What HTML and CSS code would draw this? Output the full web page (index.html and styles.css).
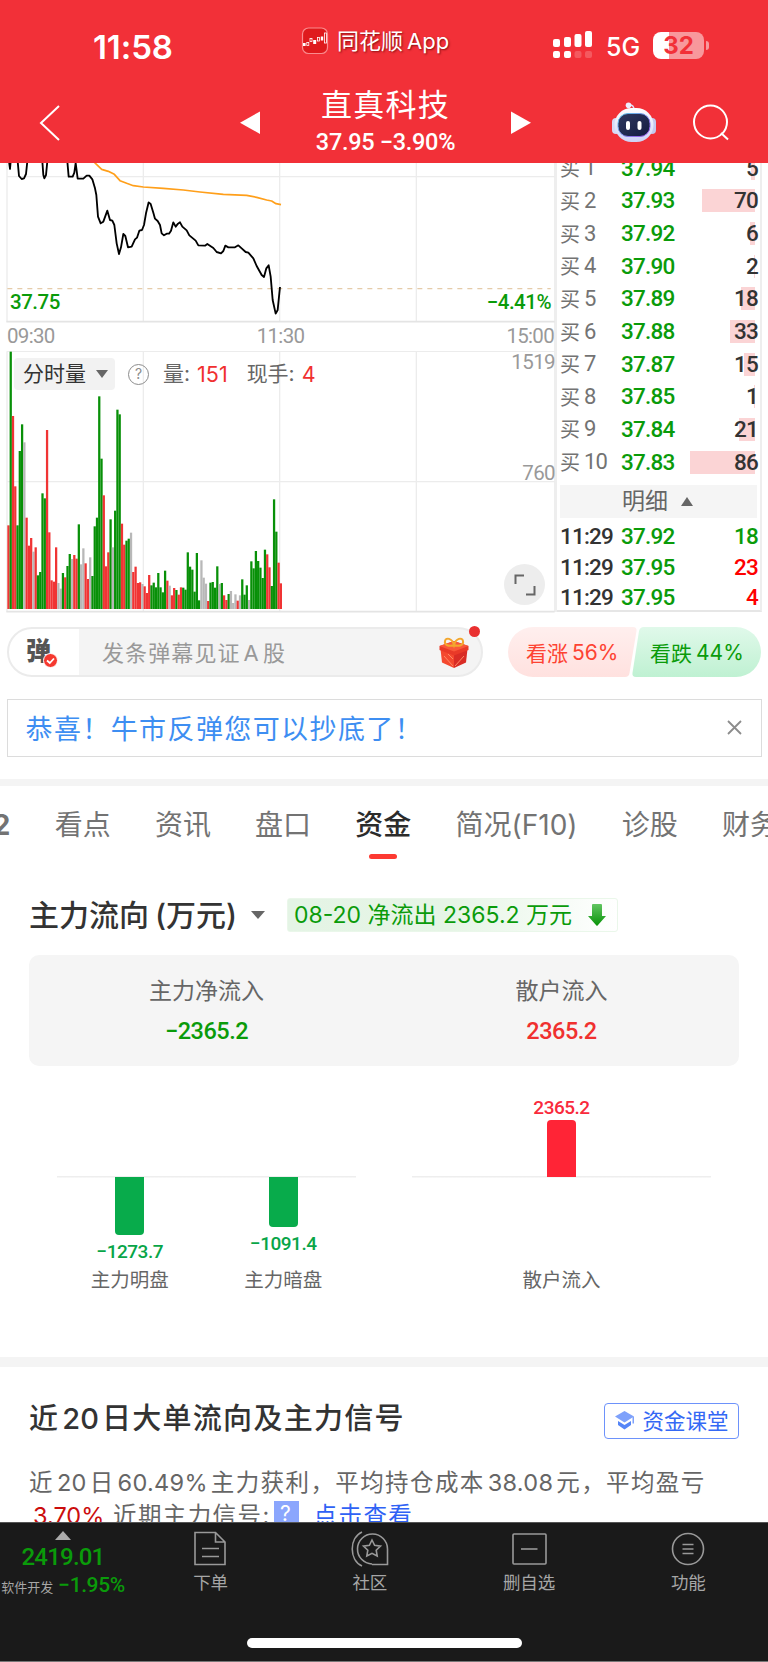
FILE: index.html
```html
<!DOCTYPE html>
<html lang="zh-CN">
<head>
  <meta charset="UTF-8">
  <meta name="viewport" content="width=device-width, initial-scale=1.0">
  <title>直真科技</title>
  <link rel="stylesheet" href="styles.css">
</head>
<body>
  <div class="app">
    <header class="header">
      <div class="status-bar">
        <span class="clock">11:58</span>
        <div class="app-tag">
          <svg width="28" height="28" viewBox="0 0 28 28" fill="none">
            <rect x="1.5" y="1" width="25" height="25.5" rx="6" fill="#df1a1d" stroke="#fa8b8e" stroke-width="1.2"/>
            <rect x="2" y="16" width="2.6" height="3" fill="#fff"/>
            <rect x="5.8" y="15.5" width="2" height="3" stroke="#fff" stroke-width=".8"/>
            <rect x="9" y="11.5" width="2" height="3" stroke="#fff" stroke-width=".8"/>
            <rect x="12.2" y="13" width="3" height="4" fill="#fff"/>
            <rect x="16.5" y="10.5" width="2" height="3.5" stroke="#fff" stroke-width=".8"/>
            <rect x="19.8" y="9.5" width="2.4" height="4" fill="#fff"/>
            <rect x="23.4" y="6" width="2" height="10" stroke="#fff" stroke-width=".8"/>
          </svg>
          <span>同花顺<em>App</em></span>
        </div>
        <svg class="signal" width="40" height="28" viewBox="0 0 40 28" fill="#fff">
          <rect x="0" y="8" width="7" height="8" rx="2"/>
          <rect x="11" y="6" width="7" height="10" rx="2"/>
          <rect x="21.5" y="3" width="7" height="13" rx="2"/>
          <rect x="32" y="0" width="7" height="16" rx="2"/>
          <rect x="0" y="20" width="7" height="7" rx="2"/>
          <rect x="11" y="20" width="7" height="7" rx="2"/>
          <rect x="21.5" y="20" width="7" height="7" rx="2" opacity=".2"/>
          <rect x="32" y="20" width="7" height="7" rx="2" opacity=".2"/>
        </svg>
        <span class="net">5G</span>
        <div class="battery"><span>32</span></div>
        <i class="battery-tip"></i>
      </div>
      <div class="title-bar">
        <svg class="back" width="22" height="38" viewBox="0 0 22 38" fill="none" stroke="#fff" stroke-width="2"><path d="M20 2L2 19L20 36"/></svg>
        <svg class="prev" width="20" height="24" viewBox="0 0 20 24" fill="#fff"><path d="M20 0.5V23L0 11.7z"/></svg>
        <div class="stock">
          <h1>直真科技</h1>
          <p>37.95 −3.90%</p>
        </div>
        <svg class="next" width="20" height="24" viewBox="0 0 20 24" fill="#fff"><path d="M0 0.5V23L20 11.7z"/></svg>
        <svg class="robot" width="44" height="42" viewBox="0 0 44 42">
          <defs>
            <linearGradient id="head" x1="0" y1="0" x2="0" y2="1"><stop offset="0" stop-color="#fff"/><stop offset="1" stop-color="#cdd2f6"/></linearGradient>
            <linearGradient id="face" x1="0" y1="0" x2="1" y2="1"><stop offset="0" stop-color="#30395f"/><stop offset="1" stop-color="#141b40"/></linearGradient>
            <linearGradient id="rim" x1="0" y1="0" x2="1" y2="1"><stop offset="0" stop-color="#5ac8e8"/><stop offset="1" stop-color="#a052e8"/></linearGradient>
          </defs>
          <path d="M17 3Q22 2.500 22 8" fill="none" stroke="#dfe2fa" stroke-width="1.600"/>
          <circle cx="16.500" cy="3.200" r="2.800" fill="#eceefe"/>
          <rect x="0" y="16" width="8" height="16" rx="4" fill="#d6daf6"/>
          <rect x="36" y="16" width="8" height="16" rx="4" fill="#c3c8ee"/>
          <rect x="2.500" y="6" width="39" height="34" rx="17" fill="url(#head)"/>
          <rect x="6" y="11.500" width="32" height="23" rx="10" fill="url(#face)" stroke="url(#rim)" stroke-width="1"/>
          <rect x="14" y="19" width="4" height="9" rx="2" fill="#fff"/>
          <rect x="25.500" y="19" width="4" height="9" rx="2" fill="#fff"/>
        </svg>
        <svg class="search" width="38" height="38" viewBox="0 0 38 38" fill="none" stroke="#fff" stroke-width="2"><circle cx="18.500" cy="18" r="16.500"/><path d="M29 29L36 35.500"/></svg>
      </div>
    </header>

    <main>
      <section class="quote">
        <div class="charts">
          <div class="price-chart">
            <svg width="556" height="160" viewBox="0 9 1668 480" fill="none">
              <path d="M21 9V485M430 9V485M839 9V485M1249 9V485M21 50H1664" stroke="#ececec" stroke-width="4"/>
              <path d="M19 485H1664" stroke="#e4e4e4" stroke-width="5"/>
              <path d="M22 386H1652" stroke="#e5cba9" stroke-width="4" stroke-dasharray="15 15"/>
              <polyline points="280,4 305,28 325,34 343,43 360,62 380,70 400,77 430,81 490,85 550,90 600,96 670,103 740,106 770,112 800,120 815,123 828,131 843,134" stroke="#ff9f1a" stroke-width="5" stroke-linejoin="round"/>
              <g stroke="#000" stroke-width="5.500" stroke-linejoin="round">
                <polyline points="27,4 30,27 32,4"/>
                <polyline points="53,4 57,48 65,57 72,55 78,42 82,4"/>
                <polyline points="127,4 130,45 133,55 138,45 142,4"/>
                <polyline points="202,4 206,50 218,50 223,38 227,9 233,56 250,56 260,47 268,47 277,58 285,85 289,105 294,170 302,190 310,185 322,152 330,180 337,182 343,195 350,250 357,282 363,262 370,222 376,228 384,262 395,260 405,238 411,233 418,212 426,210 432,195 438,160 446,127 452,132 460,158 465,176 473,183 480,195 485,220 492,226 500,221 507,221 513,212 520,187 527,200 534,191 540,187 547,200 560,211 568,226 587,242 595,256 615,257 622,252 640,264 650,276 663,280 670,273 676,257 685,262 705,262 715,256 725,265 737,276 745,278 760,295 770,318 785,345 792,351 799,325 806,316 812,350 818,420 827,461 833,450 838,400 840,381"/>
              </g>
            </svg>
            <div class="price-labels num green"><span>37.75</span><span>−4.41%</span></div>
          </div>
          <div class="time-axis num"><span>09:30</span><span>11:30</span><span>15:00</span></div>
          <div class="volume-chart">
            <svg width="556" height="262" viewBox="0 18 1668 786" fill="none">
              <path d="M21 19V800M430 19V800M839 19V800M1249 19V800M21 19H1664M21 410H1664" stroke="#ececec" stroke-width="4"/>
              <path d="M19 800H1664" stroke="#e4e4e4" stroke-width="5"/>
              <g id="volume-bars"></g>
            </svg>
            <div class="volume-head">
              <span class="indicator">分时量 <i class="tri-down"></i></span>
              <span class="help">?</span>
              <span class="vol">量: <b>151</b></span>
              <span class="vol">现手: <b>4</b></span>
            </div>
            <span class="scale scale-top num">1519</span>
            <span class="scale scale-mid num">760</span>
            <span class="expand">
              <svg width="22" height="22" viewBox="0 0 22 22" fill="none" stroke="#666" stroke-width="2"><path d="M1.500 10V1.500H10M20.500 12V20.500H12"/></svg>
            </span>
          </div>
        </div>
        <div class="book">
          <div class="orders" id="orders"></div>
          <div class="detail-toggle">明细 <i class="tri-up"></i></div>
          <div class="trades num">
            <div class="trade"><span>11:29</span><span class="green">37.92</span><span class="green">18</span></div>
            <div class="trade"><span>11:29</span><span class="green">37.95</span><span class="red">23</span></div>
            <div class="trade"><span>11:29</span><span class="green">37.95</span><span class="red">4</span></div>
          </div>
        </div>
      </section>

      <section class="danmaku">
        <div class="danmaku-input">
          <div class="danmaku-switch">弹
            <svg class="check" width="15" height="15" viewBox="0 0 15 15"><circle cx="7.500" cy="7.500" r="7" fill="#f5392f" stroke="#fff" stroke-width="1"/><path d="M4 7.500L6.800 10L11 5.500" fill="none" stroke="#fff" stroke-width="1.800"/></svg>
          </div>
          <span class="placeholder">发条弹幕见证<em>A</em>股</span>
          <svg class="gift" width="30" height="31" viewBox="0 0 30 31">
            <path d="M1.500 12L15 17V31L3 25.500z" fill="#f4492f"/>
            <path d="M28.500 12L15 17V31L27 25.500z" fill="#d92c25"/>
            <path d="M0.500 9L15 4L29.500 9V13L15 18.500L0.500 13z" fill="#e93a28"/>
            <path d="M0.500 9L15 4L29.500 9L15 14.500z" fill="#f9583a"/>
            <path d="M5 19L14 29M9 17L14 22M25 19L16 29" stroke="#ff8a66" stroke-width="1"/>
            <path d="M15 8C10 10 5 8 6 4C7 0 13 1 15 8C17 1 23 0 24 4C25 8 20 10 15 8z" fill="none" stroke="#f3a72e" stroke-width="2"/>
          </svg>
          <i class="dot"></i>
        </div>
        <div class="vote vote-up">看涨<span>56%</span></div>
        <div class="vote vote-down">看跌<span>44%</span></div>
      </section>

      <section class="notice">
        <span>恭喜！牛市反弹您可以抄底了！</span>
        <svg width="15" height="15" viewBox="0 0 15 15" stroke="#8c8c8c" stroke-width="1.800"><path d="M1 1L14 14M14 1L1 14"/></svg>
      </section>

      <nav class="tabs">
        <span class="tab tab-cut">2</span>
        <span class="tab">看点</span>
        <span class="tab">资讯</span>
        <span class="tab">盘口</span>
        <span class="tab active">资金</span>
        <span class="tab">简况(F10)</span>
        <span class="tab">诊股</span>
        <span class="tab">财务</span>
      </nav>

      <section class="flow">
        <div class="flow-head">
          <h2>主力流向<span>(万元)</span></h2>
          <i class="tri-down"></i>
          <div class="flow-badge">
            <span>08-20 净流出 2365.2 万元</span>
            <svg width="18" height="22" viewBox="0 0 18 22"><defs><linearGradient id="arrow" x1="0" y1="0" x2="0" y2="1"><stop offset="0" stop-color="#62c562"/><stop offset="1" stop-color="#089408"/></linearGradient></defs><path d="M4 1Q4 0 5 0H13Q14 0 14 1V12H18L9.600 21.500Q9 22 8.400 21.500L0 12H4z" fill="url(#arrow)"/></svg>
          </div>
        </div>
        <div class="summary">
          <div><p>主力净流入</p><b class="num green">−2365.2</b></div>
          <div><p>散户流入</p><b class="num red-soft">2365.2</b></div>
        </div>
        <div class="bars">
          <div class="bar-group">
            <div class="bar-col down"><div class="half"></div><div class="half"><i class="bar" style="height:58px"></i><span class="num">−1273.7</span></div><p>主力明盘</p></div>
            <div class="bar-col down"><div class="half"></div><div class="half"><i class="bar" style="height:50px"></i><span class="num">−1091.4</span></div><p>主力暗盘</p></div>
          </div>
          <div class="bar-group">
            <div class="bar-col up"><div class="half"><span class="num">2365.2</span><i class="bar" style="height:57px"></i></div><div class="half"></div><p>散户流入</p></div>
          </div>
        </div>
      </section>

      <section class="signal-section">
        <div class="signal-head">
          <h2>近<span>20</span>日大单流向及主力信号</h2>
          <a class="course">
            <svg width="21" height="19" viewBox="0 0 21 19" fill="#7ea1fb"><path d="M10.500 0L20 5.500L10.500 11.500L1 5.500z"/><path d="M18.500 6V12.500H20V5.500z"/><path d="M4 10L10.500 14L17 10V14L10.500 18.500L4 14z" fill="#5585f7"/></svg>
            资金课堂
          </a>
        </div>
        <p class="signal-text">近<span class="lat">20</span>日<span class="lat">60.49%</span>主力获利，平均持仓成本<span class="lat">38.08</span>元，平均盈亏</p>
        <p class="signal-text second"><span class="loss">3.70%</span><span>近期主力信号:</span><i class="q">?</i><a>点击查看</a></p>
      </section>
    </main>

    <footer class="toolbar">
      <div class="items">
        <div class="index">
          <i class="tri-up"></i>
          <span class="index-value num">2419.01</span>
          <div class="index-row"><small>软件开发</small><span class="num">−1.95%</span></div>
        </div>
        <div class="item">
          <svg width="40" height="36" viewBox="0 0 40 36" fill="none" stroke="#999" stroke-width="1.600"><path d="M4 1.500H24.500L34 11V33.500H4zM24.500 1.500V11H34M11 17.500H28M11 25.500H28"/></svg>
          <span>下单</span>
        </div>
        <div class="item">
          <svg width="40" height="36" viewBox="0 0 40 36" fill="none" stroke="#999" stroke-width="1.600"><path d="M12 1C-1 7-1 29 12 35M22 33A15 15 0 1 1 37.500 18V33.500H22"/><path d="M22 9L24.600 14.300L30.500 15.100L26.200 19.200L27.200 25L22 22.300L16.800 25L17.800 19.200L13.500 15.100L19.400 14.300z"/></svg>
          <span>社区</span>
        </div>
        <div class="item">
          <svg width="40" height="36" viewBox="0 0 40 36" fill="none" stroke="#999" stroke-width="1.600"><rect x="4" y="3" width="33" height="30" rx="1"/><path d="M12 18H28.500"/></svg>
          <span>删自选</span>
        </div>
        <div class="item">
          <svg width="40" height="36" viewBox="0 0 40 36" fill="none" stroke="#999" stroke-width="1.600"><circle cx="20" cy="18" r="15.500"/><path d="M14.500 13.500H25.500M14.500 18H25.500M14.500 22.500H25.500"/></svg>
          <span>功能</span>
        </div>
      </div>
      <div class="home-bar"></div>
    </footer>
  </div>
  <script src="script.js"></script>
</body>
</html>
```

FILE: styles.css
```css
* {
  box-sizing: border-box;
}

body {
  margin: 0;
  background: #fff;
  color: #333;
  font-family: Inter, "Noto Sans CJK SC", sans-serif;
}

h1, h2, p {
  margin: 0;
}

i, em {
  font-style: normal;
}

.app {
  width: 768px;
  height: 1662px;
  display: flex;
  flex-direction: column;
  overflow: hidden;
}

main {
  height: 1359px;
  overflow: hidden;
}

.num {
  font-family: Roboto, "Noto Sans CJK SC", sans-serif;
}

.green { color: #0a9b0a; }
.red { color: #fe0000; }
.red-soft { color: #f0302f; }

.tri-down, .tri-up {
  display: inline-block;
  border: 6px solid transparent;
}

.tri-down {
  border-top: 8px solid #666;
  border-bottom: 0;
}

.tri-up {
  border-bottom: 9px solid #666;
  border-top: 0;
}

/* header */
.header {
  height: 163px;
  flex: none;
  background: #f23038;
  color: #fff;
}

.status-bar {
  height: 85px;
  padding: 5px 58px 0 93px;
  display: flex;
  align-items: center;
}

.clock {
  width: 208px;
  font-size: 33px;
  font-weight: 600;
  letter-spacing: -0.1px;
  padding-top: 3px;
}

.app-tag {
  width: 252px;
  margin-top: -9px;
  display: flex;
  align-items: center;
  gap: 8px;
  font-size: 22px;
  line-height: 30px;
  text-shadow: 1px 1px 2px rgba(90, 0, 0, 0.7);
}

.app-tag em {
  margin-left: 4px;
}

.net {
  width: 47px;
  margin-left: 13px;
  font-size: 25px;
  font-weight: 500;
  padding-top: 3px;
}

.battery {
  width: 51px;
  height: 27px;
  border-radius: 8px;
  background: linear-gradient(to right, #fff 16px, #f8989c 16px);
  color: #f23038;
  font-size: 24px;
  font-weight: 700;
  line-height: 27px;
  text-align: center;
}

.battery-tip {
  width: 3px;
  height: 9px;
  margin-left: 2px;
  border-radius: 0 4px 4px 0;
  background: #f8989c;
}

.title-bar {
  height: 76px;
  padding-left: 39px;
  display: flex;
  align-items: center;
}

.title-bar svg {
  flex: none;
}

.prev { margin-left: 179px; }

.stock {
  width: 251px;
  text-align: center;
}

.stock h1 {
  font-size: 31px;
  font-weight: 400;
  letter-spacing: 1.2px;
  line-height: 40px;
  margin-top: -2px;
}

.stock p {
  font: 500 23.5px/34px Roboto, sans-serif;
  letter-spacing: -0.3px;
}

.robot { margin-left: 81px; }
.search { margin-left: 36px; }

/* chart + order book */
.quote {
  height: 449px;
  display: flex;
}

.charts {
  width: 557px;
  border-right: 3px solid #eee;
}

.price-chart {
  height: 160px;
  position: relative;
}

.price-chart svg, .volume-chart svg {
  display: block;
}

.price-labels {
  position: absolute;
  top: 126px;
  left: 10px;
  right: 3px;
  display: flex;
  justify-content: space-between;
  font-size: 20.5px;
  font-weight: 500;
  line-height: 26px;
  letter-spacing: -0.5px;
}

.time-axis {
  height: 28px;
  padding-left: 7px;
  display: flex;
  justify-content: space-between;
  color: #999;
  font-size: 20.5px;
  line-height: 27px;
  letter-spacing: -0.7px;
}

.volume-chart {
  position: relative;
}

.volume-head {
  position: absolute;
  left: 14px;
  top: 7px;
  height: 32px;
  display: flex;
  align-items: center;
  font-size: 21px;
  line-height: 30px;
  color: #666;
}

.indicator {
  width: 101px;
  height: 32px;
  padding-left: 9px;
  display: flex;
  align-items: center;
  gap: 10px;
  border-radius: 4px;
  background: #f2f2f2;
  color: #333;
}

.help {
  width: 21px;
  height: 21px;
  margin: 0 14px 0 13px;
  border: 1.5px solid #8c8c8c;
  border-radius: 50%;
  color: #8c8c8c;
  font-size: 14px;
  line-height: 18px;
  text-align: center;
}

.vol {
  margin-right: 19px;
  display: flex;
  align-items: center;
  gap: 7px;
}

.vol b {
  color: #f0302f;
  font-size: 21.5px;
  font-weight: 400;
}

.scale {
  position: absolute;
  right: -1px;
  color: #999;
  font-size: 20.5px;
  line-height: 24px;
  letter-spacing: -0.6px;
}

.scale-top { top: -1px; }
.scale-mid { top: 110px; }

.expand {
  position: absolute;
  left: 504px;
  top: 213px;
  width: 41px;
  height: 41px;
  display: flex;
  align-items: center;
  justify-content: center;
  border-radius: 50%;
  background: #ededed;
}

.book {
  width: 205px;
  padding-left: 3px;
  border-right: 2px solid #eee;
  border-bottom: 2px solid #e6e6e6;
  overflow: hidden;
}

.orders {
  margin-top: -11.500px;
}

.order {
  height: 32.65px;
  display: grid;
  grid-template-columns: 61px 60px 1fr;
  align-items: center;
  padding-right: 2px;
  font-family: Roboto, "Noto Sans CJK SC", sans-serif;
  font-size: 22.5px;
  letter-spacing: -0.8px;
}

.order-name {
  display: flex;
  align-items: center;
  gap: 4px;
  color: #737373;
  letter-spacing: -0.8px;
  font-size: 22px;
}

.order-name em {
  font-size: 20px;
  letter-spacing: 0;
}

.order-price, .order-count {
  font-weight: 500;
}

.order-count {
  position: relative;
  text-align: right;
}

.order-count i {
  position: absolute;
  z-index: -1;
  right: 3px;
  top: 2px;
  height: 23px;
  background: #fbd4d5;
}

.detail-toggle {
  height: 33px;
  margin: 7px 3px 3px 0;
  display: flex;
  align-items: center;
  justify-content: center;
  gap: 13px;
  padding-right: 2px;
  background: #f5f5f5;
  color: #666;
  font-size: 23px;
  line-height: 30px;
}

.trade {
  height: 30.6px;
  display: grid;
  grid-template-columns: 61px 60px 1fr;
  align-items: center;
  padding-right: 2px;
  font-size: 22.5px;
  font-weight: 500;
  letter-spacing: -0.8px;
}

.trade span:last-child {
  text-align: right;
}

/* danmaku row */
.danmaku {
  height: 50px;
  margin-top: 15px;
  padding-left: 7px;
  display: flex;
}

.danmaku-input {
  position: relative;
  width: 476px;
  margin-right: 25px;
  display: flex;
  align-items: center;
  border: 2px solid #ebebeb;
  border-radius: 25px;
  background: linear-gradient(to right, #fff 70px, #f4f4f4 70px);
}

.danmaku-switch {
  position: relative;
  width: 93px;
  padding-left: 17px;
  font-size: 25px;
  font-weight: 900;
  line-height: 44px;
  color: #555;
  margin-top: -2px;
}

.check {
  position: absolute;
  left: 34px;
  top: 24px;
}

.placeholder {
  flex: 1;
  margin-top: -2px;
  color: #999;
  font-size: 22px;
  letter-spacing: 1.1px;
}

.placeholder em {
  margin: 0 3px;
}

.gift { margin-right: 12px; }

.dot {
  position: absolute;
  right: 1px;
  top: -3px;
  width: 11px;
  height: 11px;
  border-radius: 50%;
  background: #e93030;
}

.vote {
  width: 129px;
  height: 50px;
  display: flex;
  align-items: center;
  gap: 4px;
  font-size: 21px;
}

.vote-up {
  padding-left: 18px;
  margin-right: -5px;
  background: linear-gradient(#ffefee, #ffe1df);
  color: #fd4332;
  clip-path: path("M25 0H125Q129 0 128.500 4L121.500 46Q121 50 117 50H25A25 25 0 0 1 25 0z");
}

.vote-down {
  padding-left: 18px;
  background: linear-gradient(#e0f9ea, #bff1d2);
  color: #0a9b0a;
  clip-path: path("M12 0H104A25 25 0 0 1 104 50H4Q0 50 0.500 46L7 4Q8 0 12 0z");
}

.notice {
  height: 58px;
  margin: 21.500px 6px 0 6.500px;
  padding: 0 19px 1px 18px;
  display: flex;
  align-items: center;
  justify-content: space-between;
  border: 1.5px solid #dcdcdc;
  color: #3d8ef2;
  font-size: 27px;
  letter-spacing: 1.4px;
}

/* tabs */
.tabs {
  height: 88px;
  margin-top: 22px;
  border-top: 7px solid #f4f4f4;
  display: flex;
  gap: 44.2px;
  overflow: hidden;
  white-space: nowrap;
  font-size: 28px;
  color: #737373;
}

.tab {
  flex: none;
  position: relative;
  line-height: 79px;
}

.tab-cut {
  width: 10.5px;
  display: flex;
  justify-content: flex-end;
  font-weight: 700;
}

.active {
  color: #2b2b2b;
  font-weight: 500;
}

.active::after {
  content: "";
  position: absolute;
  left: 50%;
  top: 68px;
  width: 28px;
  height: 5px;
  margin-left: -14px;
  border-radius: 3px;
  background: #fd3a32;
}

/* fund flow */
.flow {
  height: 490px;
  padding: 30.500px 29px 0;
}

.flow-head {
  height: 36px;
  display: flex;
  align-items: center;
}

.flow-head h2 {
  width: 222px;
  font-size: 30px;
  font-weight: 500;
  line-height: 36px;
  white-space: nowrap;
}

.flow-head h2 span {
  margin-left: 6px;
}

.flow-head .tri-down {
  border-left-width: 7px;
  border-right-width: 7px;
}

.flow-badge {
  width: 331px;
  height: 34px;
  margin-left: 22px;
  padding: 0 11px 0 6px;
  display: flex;
  align-items: center;
  justify-content: space-between;
  border: 1px solid #eaf7ea;
  border-radius: 3px;
  background: linear-gradient(to right, #e4f4e5, #e6f5e6 50%, #fff);
  color: #0a9b0a;
  font-size: 23px;
  line-height: 30px;
  white-space: nowrap;
}

.flow-badge span {
  margin-top: -1px;
}

.summary {
  height: 111px;
  margin-top: 22px;
  display: flex;
  border-radius: 10px;
  background: #f5f5f5;
  text-align: center;
}

.summary > div {
  flex: 1;
  padding-top: 20px;
}

.summary p {
  font-size: 23px;
  line-height: 32px;
  color: #666;
}

.summary b {
  display: block;
  margin-top: 8px;
  font-size: 23.5px;
  font-weight: 500;
  line-height: 32px;
  letter-spacing: -0.5px;
}

.bars {
  margin-top: 31px;
  padding: 0 28px;
  display: flex;
  gap: 56px;
}

.bar-group {
  flex: 1;
  display: flex;
  justify-content: center;
  gap: 9px;
  background: linear-gradient(#eee, #eee) 0 79px / 100% 1.5px no-repeat;
}

.bar-col {
  width: 144.5px;
  text-align: center;
  color: #666;
}

.half {
  height: 80px;
  display: flex;
  flex-direction: column;
  align-items: center;
}

.bar {
  width: 29px;
  flex: none;
}

.half .num {
  font-size: 19px;
  font-weight: 500;
  line-height: 24px;
  letter-spacing: -0.5px;
}

.up .half { justify-content: flex-end; }
.up .bar { border-radius: 4px 4px 0 0; background: #ff2436; }
.up .num { color: #f92a3c; }
.down .bar { border-radius: 0 0 4px 4px; background: #08ab4b; }
.down .num { color: #08a548; margin-top: 5px; }

.bar-col p {
  margin-top: 9px;
  font-size: 19.5px;
  line-height: 28px;
}

/* signals */
.signal-section {
  border-top: 10px solid #f4f4f4;
  padding: 36px 29px 0;
}

.signal-head {
  height: 37px;
  display: flex;
  align-items: center;
  justify-content: space-between;
}

.signal-head h2 {
  margin-top: -6px;
  font-size: 29px;
  font-weight: 500;
  line-height: 37px;
  letter-spacing: 1.3px;
}

.signal-head h2 span {
  margin: 0 3px;
  letter-spacing: 0;
}

.course {
  width: 135px;
  height: 36px;
  padding-bottom: 1px;
  display: flex;
  align-items: center;
  justify-content: center;
  gap: 7px;
  border: 1.5px solid #6d92fb;
  border-radius: 4px;
  color: #3468f5;
  font-size: 21.5px;
  line-height: 30px;
}

.signal-text {
  margin-top: 26px;
  font-size: 23.5px;
  line-height: 34px;
  letter-spacing: 1.4px;
  color: #666;
  white-space: nowrap;
}

.lat {
  margin: 0 3px;
  letter-spacing: 0.3px;
}

.second {
  margin-top: -1px;
  display: flex;
  align-items: center;
}

.loss {
  width: 84px;
  padding-left: 4px;
  color: #cb0d0d;
  letter-spacing: 0;
}

.q {
  width: 25px;
  height: 25px;
  margin: -5px 15px 0 3px;
  background: #8ba6fd;
  color: #fff;
  font-size: 21px;
  line-height: 25px;
  text-align: center;
}

.second a { color: #2f62f5; }

/* bottom toolbar */
.toolbar {
  height: 140px;
  flex: none;
  border-top: 1px solid #555;
  border-bottom: 1px solid #777;
  background: #1a1a1a;
  color: #a6a6a6;
}

.items {
  height: 115px;
  padding-top: 8px;
  display: flex;
}

.index {
  width: 131px;
  padding-right: 5px;
  display: flex;
  flex-direction: column;
  align-items: center;
  color: #0a9b0a;
}

.index .tri-up {
  border-width: 0 8px 9px;
  border-bottom-color: #aaa;
}

.index-value {
  margin-top: 1px;
  font-size: 24px;
  font-weight: 500;
  line-height: 32px;
  letter-spacing: -0.8px;
}

.index-row {
  margin-top: -2px;
  display: flex;
  align-items: center;
  gap: 5px;
  font-size: 21px;
  font-weight: 500;
  line-height: 24px;
  letter-spacing: -0.4px;
  white-space: nowrap;
}

.index-row small {
  padding-top: 4px;
  font-size: 13px;
  font-weight: 400;
  letter-spacing: 0;
  color: #a6a6a6;
}

.item {
  flex: 1;
  display: flex;
  flex-direction: column;
  align-items: center;
  font-size: 17.5px;
}

.item span {
  margin-top: 3px;
  line-height: 26px;
}

.home-bar {
  width: 275px;
  height: 10px;
  margin: 0 auto;
  border-radius: 5px;
  background: #fff;
}
```

FILE: script.js
```js
// one entry per minute: colour + top edge of the bar in the volume pane
const volume = `r541 g20 r213 r424 g541 g318 g238 n292 r518 r602 r579 n620 r607 g691 g681 g445 g460 r255 r562 r706
r710 r607 n714 n731 g684 r697 g663 g627 n642 r630 r641 g538 n658 n610 r655 r702 n637 g693 g544 g518
g154 g341 r451 r664 r622 g523 n607 g497 g194 g208 r536 r599 g587 g581 n563 r681 r665 r714 r712 n717
r724 r744 r690 g721 g713 g727 g684 g727 g742 g677 r707 n722 r751 r729 g735 r749 r727 g728 g734 g622
g665 g674 g740 g624 g766 n646 n698 n716 r768 g713 g711 g728 g664 n717 g714 r751 r765 g747 n738 n774
n748 r767 n751 g703 g749 g721 n765 g649 g670 g618 g648 g668 g699 g614 r628 r667 g723 g463 g560 r653 r715`;

const colors = { r: '#f03434', g: '#089008', n: '#b8b8b8' };
const base = 792;
const step = 6.81;

document.getElementById('volume-bars').innerHTML = volume.split(/\s+/).map((v, i) => {
  const top = Number(v.slice(1));
  return `<rect x="${(22 + i * step).toFixed(1)}" y="${top}" width="6.8" height="${base - top}" fill="${colors[v[0]]}"/>`;
}).join('');

// buy side of the order book: [price, lots]
const orders = [
  ['37.94', 5], ['37.93', 70], ['37.92', 6], ['37.90', 2], ['37.89', 18],
  ['37.88', 33], ['37.87', 15], ['37.85', 1], ['37.84', 21], ['37.83', 86]
];

document.getElementById('orders').innerHTML = orders.map(([price, lots], i) => `
  <div class="order">
    <span class="order-name"><em>买</em>${i + 1}</span>
    <span class="order-price green">${price}</span>
    <span class="order-count"><i style="width:${Math.max(1, lots * 0.757)}px"></i>${lots}</span>
  </div>`).join('');
```
